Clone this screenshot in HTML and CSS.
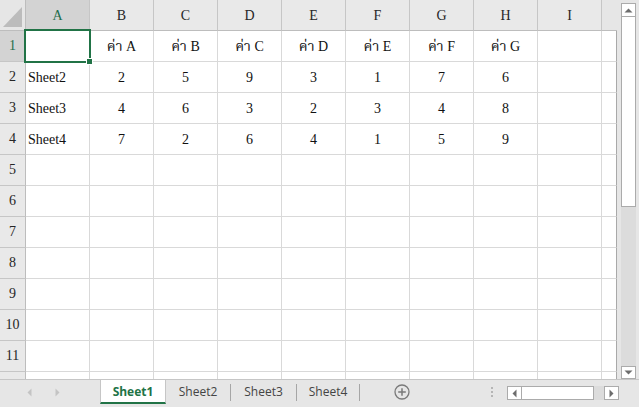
FILE: index.html
```html
<!DOCTYPE html>
<html lang="th">
<head>
<meta charset="utf-8">
<title>Sheet1</title>
<link rel="stylesheet" href="styles.css">
</head>
<body>
<div class="app">
  <div class="main">
    <div class="sheet">
      <div class="grid">
        <div class="corner"><svg width="26" height="31" viewBox="0 0 26 31"><polygon points="3,27 22,27 22,7" fill="#bcbcbc"/></svg></div>
        <div class="ch sel">A</div><div class="ch">B</div><div class="ch">C</div><div class="ch">D</div><div class="ch">E</div><div class="ch">F</div><div class="ch">G</div><div class="ch">H</div><div class="ch">I</div><div class="ch end"></div>

        <div class="rh sel">1</div><div class="c"></div><div class="c n">ค่า A</div><div class="c n">ค่า B</div><div class="c n">ค่า C</div><div class="c n">ค่า D</div><div class="c n">ค่า E</div><div class="c n">ค่า F</div><div class="c n">ค่า G</div><div class="c"></div><div class="c end"></div>

        <div class="rh">2</div><div class="c">Sheet2</div><div class="c n">2</div><div class="c n">5</div><div class="c n">9</div><div class="c n">3</div><div class="c n">1</div><div class="c n">7</div><div class="c n">6</div><div class="c"></div><div class="c end"></div>

        <div class="rh">3</div><div class="c">Sheet3</div><div class="c n">4</div><div class="c n">6</div><div class="c n">3</div><div class="c n">2</div><div class="c n">3</div><div class="c n">4</div><div class="c n">8</div><div class="c"></div><div class="c end"></div>

        <div class="rh">4</div><div class="c">Sheet4</div><div class="c n">7</div><div class="c n">2</div><div class="c n">6</div><div class="c n">4</div><div class="c n">1</div><div class="c n">5</div><div class="c n">9</div><div class="c"></div><div class="c end"></div>

        <div class="rh">5</div><div class="c"></div><div class="c"></div><div class="c"></div><div class="c"></div><div class="c"></div><div class="c"></div><div class="c"></div><div class="c"></div><div class="c"></div><div class="c end"></div>
        <div class="rh">6</div><div class="c"></div><div class="c"></div><div class="c"></div><div class="c"></div><div class="c"></div><div class="c"></div><div class="c"></div><div class="c"></div><div class="c"></div><div class="c end"></div>
        <div class="rh">7</div><div class="c"></div><div class="c"></div><div class="c"></div><div class="c"></div><div class="c"></div><div class="c"></div><div class="c"></div><div class="c"></div><div class="c"></div><div class="c end"></div>
        <div class="rh">8</div><div class="c"></div><div class="c"></div><div class="c"></div><div class="c"></div><div class="c"></div><div class="c"></div><div class="c"></div><div class="c"></div><div class="c"></div><div class="c end"></div>
        <div class="rh">9</div><div class="c"></div><div class="c"></div><div class="c"></div><div class="c"></div><div class="c"></div><div class="c"></div><div class="c"></div><div class="c"></div><div class="c"></div><div class="c end"></div>
        <div class="rh">10</div><div class="c"></div><div class="c"></div><div class="c"></div><div class="c"></div><div class="c"></div><div class="c"></div><div class="c"></div><div class="c"></div><div class="c"></div><div class="c end"></div>
        <div class="rh">11</div><div class="c"></div><div class="c"></div><div class="c"></div><div class="c"></div><div class="c"></div><div class="c"></div><div class="c"></div><div class="c"></div><div class="c"></div><div class="c end"></div>
        <div class="rh"></div><div class="c"></div><div class="c"></div><div class="c"></div><div class="c"></div><div class="c"></div><div class="c"></div><div class="c"></div><div class="c"></div><div class="c"></div><div class="c end"></div>
      </div>
      <div class="cursor"><span class="handle"></span></div>
    </div>
    <div class="vscroll">
      <div class="vbar">
        <div class="vbtn up"><svg width="9" height="5" viewBox="0 0 9 5"><polygon points="0.5,4.5 8.5,4.5 4.5,0.5" fill="#6d6d6d"/></svg></div>
        <div class="vthumb"></div>
        <div class="vtrack"></div>
        <div class="vbtn down"><svg width="9" height="5" viewBox="0 0 9 5"><polygon points="0.5,0.5 8.5,0.5 4.5,4.5" fill="#6d6d6d"/></svg></div>
      </div>
    </div>
  </div>
  <div class="tabbar">
    <div class="nav">
      <svg width="5" height="9" viewBox="0 0 5 9"><polygon points="4.5,0.5 4.5,8.5 0.5,4.5" fill="#c4c4c4"/></svg>
      <svg width="5" height="9" viewBox="0 0 5 9"><polygon points="0.5,0.5 0.5,8.5 4.5,4.5" fill="#c4c4c4"/></svg>
    </div>
    <div class="tab current w1">Sheet1</div>
    <div class="tab w2">Sheet2</div>
    <span class="sep"></span>
    <div class="tab w3">Sheet3</div>
    <span class="sep"></span>
    <div class="tab w4">Sheet4</div>
    <span class="sep"></span>
    <div class="add"><svg width="16" height="16" viewBox="0 0 16 16"><circle cx="8" cy="8" r="7" fill="none" stroke="#7a7a7a" stroke-width="1.3"/><path d="M8 4.2V11.8M4.2 8H11.8" stroke="#7a7a7a" stroke-width="1.5"/></svg></div>
    <div class="dots"><i></i><i></i><i></i></div>
    <div class="hscroll">
      <div class="hbtn"><svg width="5" height="9" viewBox="0 0 5 9"><polygon points="4.5,0.5 4.5,8.5 0.5,4.5" fill="#6d6d6d"/></svg></div>
      <div class="hthumb"></div>
      <div class="htrack"></div>
      <div class="hbtn"><svg width="5" height="9" viewBox="0 0 5 9"><polygon points="0.5,0.5 0.5,8.5 4.5,4.5" fill="#6d6d6d"/></svg></div>
    </div>
  </div>
</div>
</body>
</html>
```
FILE: styles.css
```css
* { box-sizing: border-box; }
html, body { margin: 0; padding: 0; }
body {
  width: 639px;
  height: 407px;
  overflow: hidden;
  background: #e6e6e6;
  font-family: "Liberation Serif", "Noto Serif Thai", "Noto Sans Thai", serif;
}
.app { width: 639px; height: 407px; display: flex; flex-direction: column; }
.main { height: 379px; display: flex; }

.sheet { position: relative; width: 617px; height: 379px; overflow: hidden; }
.grid {
  display: grid;
  grid-template-columns: 26px repeat(9, 64px) 15px;
  grid-template-rows: 31px repeat(12, 31px);
  background: #ffffff;
}
.corner {
  background: #e6e6e6;
  border-right: 1px solid #bdbdbd;
  border-bottom: 1px solid #bdbdbd;
}
.corner svg { display: block; }
.ch, .rh {
  background: #e9e9e9;
  color: #262626;
  font-size: 14px;
  display: flex;
  align-items: center;
  justify-content: center;
}
.ch { border-right: 1px solid #c6c6c6; border-bottom: 1px solid #bdbdbd; padding-top: 1px; }
.rh { border-right: 1px solid #bdbdbd; border-bottom: 1px solid #c6c6c6; }
.ch.sel, .rh.sel { background: #d3d3d3; color: #1f6e4c; }
.ch.end { border-right: none; background: #e6e6e6; }

.c {
  border-right: 1px solid #d9d9d9;
  border-bottom: 1px solid #d9d9d9;
  font-size: 14px;
  color: #111;
  display: flex;
  align-items: center;
  padding-left: 2px;
  padding-top: 1px;
  white-space: nowrap;
}
.c.n { justify-content: center; padding-left: 0; }
.c.end { border-right: 1px solid #a9a9a9; }

.cursor {
  position: absolute;
  left: 24px;
  top: 29px;
  width: 67px;
  height: 34px;
  border: 2px solid #217346;
}
.handle {
  position: absolute;
  right: -4px;
  bottom: -4px;
  width: 7px;
  height: 7px;
  background: #217346;
  border: 1px solid #ffffff;
}

.vscroll { width: 22px; padding: 3px 0 0 4px; display: flex; }
.vbar { width: 15px; display: flex; flex-direction: column; }
.vbtn {
  background: #ffffff;
  border: 1px solid #ababab;
  display: flex;
  align-items: center;
  justify-content: center;
}
.vbtn svg { display: block; }
.vbtn.up { height: 14px; }
.vbtn.down { height: 13px; }
.vthumb {
  height: 190px;
  background: #ffffff;
  border: 1px solid #ababab;
  border-top: none;
}
.vtrack { flex: 1; background: #dcdcdc; }

.tabbar {
  height: 28px;
  border-top: 1px solid #c6c6c6;
  display: flex;
  align-items: flex-start;
  font-family: "Open Sans", "Noto Sans", sans-serif;
  font-size: 12px;
}
.nav { width: 100px; height: 24px; display: flex; align-items: center; padding-left: 27px; gap: 23px; }
.nav svg { display: block; }
.tab {
  height: 24px;
  display: flex;
  align-items: center;
  justify-content: center;
  color: #444444;
  padding-bottom: 1px;
}
.tab.current {
  background: #ffffff;
  border-left: 1px solid #c6c6c6;
  border-right: 1px solid #c6c6c6;
  border-bottom: 2px solid #217346;
  color: #217346;
  font-weight: bold;
  padding-bottom: 0;
}
.w1 { width: 66px; }
.w2 { width: 64px; }
.w3 { width: 65px; }
.w4 { width: 62px; }
.sep { width: 1px; height: 17px; margin-top: 4px; background: #a6a6a6; }
.add { margin-left: 34px; margin-top: 4px; }
.add svg { display: block; }
.dots {
  margin-left: auto;
  margin-right: 14px;
  margin-top: 7px;
  width: 2px;
  display: flex;
  flex-direction: column;
  gap: 2px;
}
.dots i { display: block; width: 2px; height: 2px; background: #b5b5b5; }
.hscroll { width: 112px; height: 14px; margin-top: 6px; margin-right: 20px; display: flex; }
.hbtn {
  width: 15px;
  height: 14px;
  background: #ffffff;
  border: 1px solid #ababab;
  display: flex;
  align-items: center;
  justify-content: center;
}
.hbtn svg { display: block; }
.hthumb { width: 73px; height: 14px; background: #ffffff; border: 1px solid #ababab; border-left: none; }
.htrack { width: 10px; height: 14px; background: #dcdcdc; }
```
